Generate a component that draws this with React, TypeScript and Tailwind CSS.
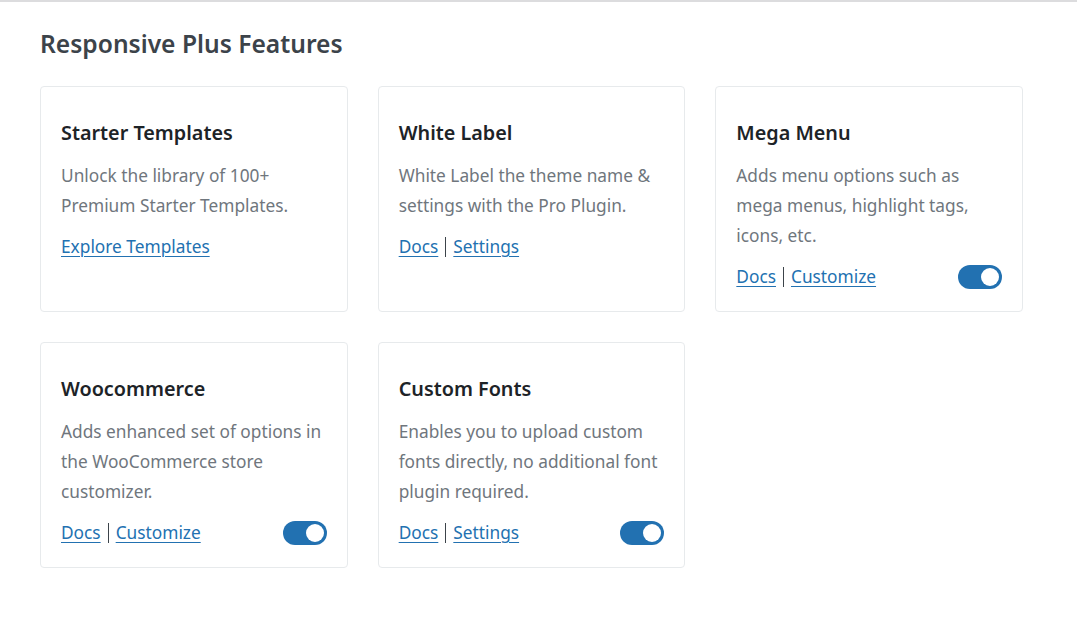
import { useState } from 'react'

type Feature = {
  title: string
  description: string
  links: string[]
  toggle?: boolean
}

const features: Feature[] = [
  {
    title: 'Starter Templates',
    description: 'Unlock the library of 100+ Premium Starter Templates.',
    links: ['Explore Templates'],
  },
  {
    title: 'White Label',
    description: 'White Label the theme name & settings with the Pro Plugin.',
    links: ['Docs', 'Settings'],
  },
  {
    title: 'Mega Menu',
    description: 'Adds menu options such as mega menus, highlight tags, icons, etc.',
    links: ['Docs', 'Customize'],
    toggle: true,
  },
  {
    title: 'Woocommerce',
    description: 'Adds enhanced set of options in the WooCommerce store customizer.',
    links: ['Docs', 'Customize'],
    toggle: true,
  },
  {
    title: 'Custom Fonts',
    description: 'Enables you to upload custom fonts directly, no additional font plugin required.',
    links: ['Docs', 'Settings'],
    toggle: true,
  },
]

function Toggle() {
  const [on, setOn] = useState(true)
  return (
    <button
      onClick={() => setOn(!on)}
      className={`relative h-[24px] w-[44px] rounded-full ${on ? 'bg-[#2271b1]' : 'bg-gray-300'}`}
    >
      <span
        className={`absolute top-[3px] h-[18px] w-[18px] rounded-full bg-white ${on ? 'left-[23px]' : 'left-[3px]'}`}
      />
    </button>
  )
}

export default function App() {
  return (
    <div
      className="min-h-[617px] w-[1077px] border-t-2 border-[#dcdcde] bg-white pl-[40px] pt-[26px]"
      style={{ fontFamily: '"Noto Sans", "Open Sans", sans-serif' }}
    >
      <h2 className="text-[24.6px] font-semibold leading-[32px] text-[#3c434a]">Responsive Plus Features</h2>

      <div className="mt-[26px] grid w-[983px] grid-cols-3 gap-x-[30px] gap-y-[30px]">
        {features.map((f) => (
          <div key={f.title} className="flex h-[226px] flex-col rounded-[4px] border border-[#e7eaec] bg-white px-[20px] pt-[31px]">
            <h3 className="text-[19.8px] font-semibold leading-[30px] text-[#1d2327]">{f.title}</h3>
            <p className="mt-[13px] text-[17.3px] leading-[30px] text-[#6f767d]">{f.description}</p>
            <div className="mt-[11px] flex items-center justify-between">
              <div className="flex items-center text-[17.3px] leading-[30px] text-[#2271b1]">
                {f.links.map((l, i) => (
                  <span key={l} className="flex items-center">
                    {i > 0 && <span className="mx-[7px] h-[20px] w-px bg-[#3c434a]" />}
                    <a href="#" className="underline decoration-1 underline-offset-[3px]">{l}</a>
                  </span>
                ))}
              </div>
              {f.toggle && <Toggle />}
            </div>
          </div>
        ))}
      </div>
    </div>
  )
}
